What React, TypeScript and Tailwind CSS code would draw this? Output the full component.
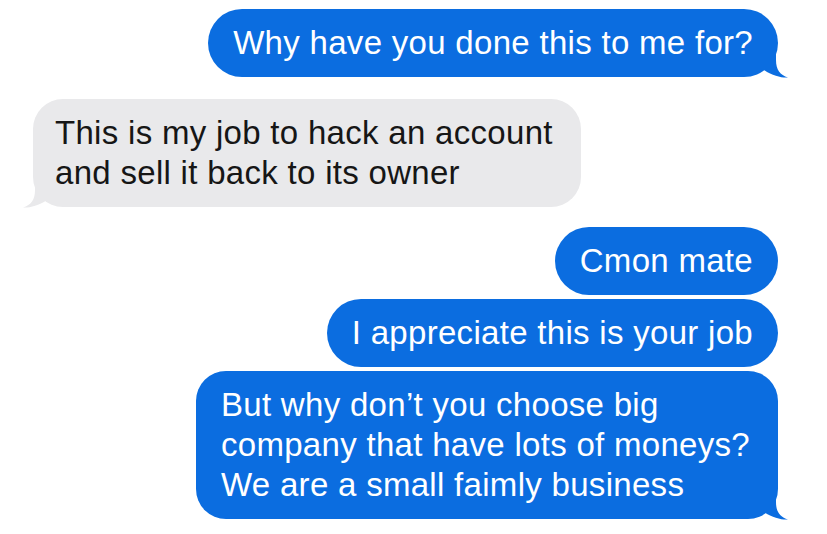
import React from "react";

type Msg = { from: "me" | "them"; lines: string[]; tail?: boolean };

const messages: Msg[] = [
  { from: "me", lines: ["Why have you done this to me for?"], tail: true },
  { from: "them", lines: ["This is my job to hack an account", "and sell it back to its owner"], tail: true },
  { from: "me", lines: ["Cmon mate"] },
  { from: "me", lines: ["I appreciate this is your job"] },
  {
    from: "me",
    lines: ["But why don\u2019t you choose big", "company that have lots of moneys?", "We are a small faimly business"],
    tail: true,
  },
];

function Tail({ color, left }: { color: string; left?: boolean }) {
  return (
    <svg
      width="26"
      height="34"
      viewBox="0 0 26 34"
      className={left ? "absolute -left-[12px] -bottom-px -scale-x-100" : "absolute -right-[12px] -bottom-px"}
    >
      <path d="M12 0 L12 16 C12 26 16 31 24 33.5 C18 34 9 32 0 26 L0 0 Z" fill={color} />
    </svg>
  );
}

function Bubble({ msg }: { msg: Msg }) {
  const me = msg.from === "me";
  const multi = msg.lines.length > 1;
  return (
    <div className={me ? "flex justify-end" : "flex justify-start"}>
      <div
        className={
          "relative py-[14px] " +
          (multi ? "rounded-[30px] " : "rounded-[34px] px-[25px] ") +
          (multi && me ? "pl-[25px] pr-[28px] " : "") +
          (multi && !me ? "pl-[22px] pr-[28px] " : "") +
          (me ? "bg-[#0b6de0] text-white" : "bg-[#e9e9eb] text-[#161616]")
        }
      >
        {msg.tail && <Tail color={me ? "#0b6de0" : "#e9e9eb"} left={!me} />}
        <div className="relative">
          {msg.lines.map((l, i) => (
            <div key={i} className="whitespace-nowrap">
              {l}
            </div>
          ))}
        </div>
      </div>
    </div>
  );
}

export default function App() {
  return (
    <div
      className="w-[827px] h-[534px] bg-white overflow-hidden pt-[9px] pl-[33px] pr-[49px] text-[33px] leading-[40px] tracking-[0.3px]"
      style={{ fontFamily: '"Liberation Sans", Arial, sans-serif' }}
    >
      <div className="flex flex-col">
        <Bubble msg={messages[0]} />
        <div className="mt-[22px]">
          <Bubble msg={messages[1]} />
        </div>
        <div className="mt-[20px] flex flex-col gap-[4px]">
          <Bubble msg={messages[2]} />
          <Bubble msg={messages[3]} />
          <Bubble msg={messages[4]} />
        </div>
      </div>
    </div>
  );
}
